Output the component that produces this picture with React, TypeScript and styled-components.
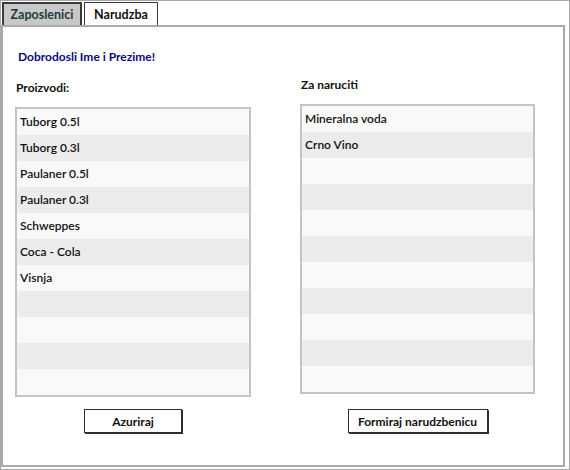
import React from 'react';
import styled, { createGlobalStyle } from 'styled-components';

const products = ['Tuborg 0.5l', 'Tuborg 0.3l', 'Paulaner 0.5l', 'Paulaner 0.3l', 'Schweppes', 'Coca - Cola', 'Visnja'];
const ordered = ['Mineralna voda', 'Crno Vino'];
const ROWS = 11;

const fill = (items: string[]) => [...items, ...Array(ROWS - items.length).fill('')];

const App: React.FC = () => {
  return (
    <>
      <GlobalStyle />
      <Frame>
        <TabBar>
          <Tab $active $width={80}>Zaposlenici</Tab>
          <Tab $width={74}>Narudzba</Tab>
        </TabBar>
        <Panel>
          <Greeting>Dobrodosli Ime i Prezime!</Greeting>
          <Columns>
            <Column $shift={3} $width={236}>
              <Label>Proizvodi:</Label>
              <List>
                {fill(products).map((name, i) => (
                  <Row key={i} $odd={i % 2 === 1}>{name}</Row>
                ))}
              </List>
              <Button>Azuriraj</Button>
            </Column>
            <Column $shift={0} $width={235}>
              <Label>Za naruciti</Label>
              <List>
                {fill(ordered).map((name, i) => (
                  <Row key={i} $odd={i % 2 === 1}>{name}</Row>
                ))}
              </List>
              <Button $wide>Formiraj narudzbenicu</Button>
            </Column>
          </Columns>
        </Panel>
      </Frame>
    </>
  );
};

const GlobalStyle = createGlobalStyle`
  body {
    margin: 0;
    background: #fff;
    font-family: Lato, "Open Sans", sans-serif;
  }
`;

const Frame = styled.div`
  box-sizing: border-box;
  width: 570px;
  height: 470px;
  border: 1px solid #a8a8a8;
  padding: 1px 4px 2px 0;
  display: flex;
  flex-direction: column;
`;

const TabBar = styled.div`
  display: flex;
  gap: 2px;
  padding-left: 1px;
  height: 23px;
`;

const Tab = styled.div<{ $active?: boolean; $width: number }>`
  box-sizing: border-box;
  width: ${p => p.$width}px;
  height: 23px;
  display: flex;
  align-items: center;
  justify-content: center;
  border: 1px solid #3a3a3a;
  border-width: ${p => (p.$active ? '2px 2px 0 2px' : '1px 1px 0 1px')};
  background: ${p => (p.$active ? '#c8c8c8' : '#fff')};
  color: ${p => (p.$active ? '#1d3b3d' : '#111')};
  font-size: 12.5px;
  font-weight: 700;
`;

const Panel = styled.div`
  flex: 1;
  border: 2px solid #aaaaaa;
  padding: 22px 0 0 12px;
`;

const Greeting = styled.div`
  margin-left: 3px;
  color: #0a0a7a;
  font-size: 12px;
  font-weight: 700;
  line-height: 16px;
`;

const Columns = styled.div`
  display: flex;
  gap: 49px;
  margin-top: 12px;
`;

const Column = styled.div<{ $shift: number; $width: number }>`
  width: ${p => p.$width}px;
  padding-top: ${p => p.$shift}px;
  display: flex;
  flex-direction: column;
  align-items: stretch;

  & > button {
    margin-top: ${p => 15 - p.$shift}px;
  }
`;

const Label = styled.div`
  margin-left: 1px;
  font-size: 12px;
  font-weight: 700;
  line-height: 16px;
  color: #111;
  margin-bottom: 11px;
`;

const List = styled.div`
  border: 2px solid #c4c4c4;
  display: flex;
  flex-direction: column;
`;

const Row = styled.div<{ $odd: boolean }>`
  height: 26px;
  line-height: 26px;
  padding-left: 3px;
  background: ${p => (p.$odd ? '#ececec' : '#f9f9f9')};
  font-size: 12px;
  font-weight: 600;
  color: #111;
`;

const Button = styled.button<{ $wide?: boolean }>`
  align-self: center;
  width: ${p => (p.$wide ? 140 : 98)}px;
  height: 24px;
  box-sizing: border-box;
  border: 1px solid #2e2e2e;
  box-shadow: 1px 1px 0 #2e2e2e;
  background: #fff;
  font-family: Lato, "Open Sans", sans-serif;
  font-size: 12px;
  font-weight: 700;
  color: #111;
  padding: 0;
`;

export default App;
